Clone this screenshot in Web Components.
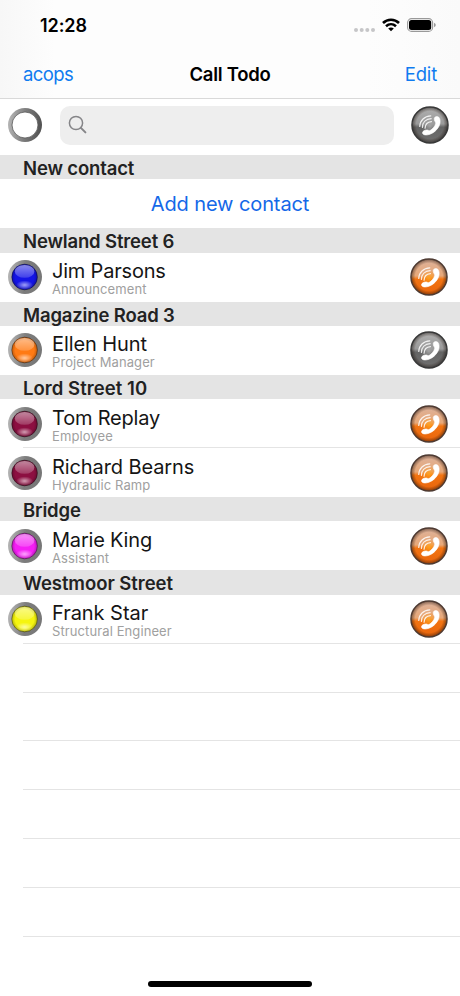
<!DOCTYPE html>
<html lang="en">
<head>
<meta charset="utf-8">
<title>Call Todo</title>
<style>
  body {
    margin: 0;
    background: #fff;
    font-family: Inter, "Liberation Sans", sans-serif;
    color: #151515;
  }
</style>
</head>
<body>
<todo-app></todo-app>
<script>
const define = (name, html) => {
  customElements.define(name, class extends HTMLElement {
    constructor() {
      super();
      this.attachShadow({ mode: "open" });
    }

    connectedCallback() {
      this.shadowRoot.innerHTML = typeof html === "function" ? html(this) : html;
    }
  });
};

define("status-bar", `
  <style>
    :host {
      display: flex;
      align-items: center;
      height: 50px;
      box-sizing: border-box;
      padding: 0 24px 0 40px;
      color: #000;
    }
    time {
      flex: 1;
      font-size: 18px;
      font-weight: 600;
      letter-spacing: -0.1px;
    }
    svg { display: block; }
    .dots { margin: 9px 7px 0 0; }
    .wifi { margin-right: 7px; }
  </style>
  <time>12:28</time>
  <svg class="dots" width="21" height="4" fill="#c6c6c8">
    <circle cx="2" cy="2" r="2"/><circle cx="7.7" cy="2" r="2"/>
    <circle cx="13.3" cy="2" r="2"/><circle cx="19" cy="2" r="2"/>
  </svg>
  <svg class="wifi" width="18" height="14" viewBox="0 0 18 14" fill="none" stroke="#000" stroke-width="2.6">
    <path d="M1 5 C5.5 .6 12.5 .6 17 5"/>
    <path d="M4 8.2 C7 5.5 11 5.5 14 8.2"/>
    <path d="M9 13.2 L6.2 10.5 C7.8 9.1 10.2 9.1 11.8 10.5 Z" fill="#000" stroke="none"/>
  </svg>
  <svg width="29" height="14" viewBox="0 0 29 14">
    <rect x=".6" y=".6" width="25" height="12.8" rx="4" fill="none" stroke="#999" stroke-width="1.1"/>
    <rect x="2" y="2" width="22.2" height="10" rx="2.5"/>
    <path d="M27 4.7 Q28.8 5.5 28.8 7 Q28.8 8.5 27 9.3 Z" fill="#999"/>
  </svg>
`);

define("nav-bar", `
  <style>
    :host {
      display: grid;
      grid-template-columns: 1fr auto 1fr;
      align-items: center;
      height: 48.5px;
      box-sizing: border-box;
      padding: 0 23px;
      border-bottom: 1px solid #d9d9d9;
      font-size: 18.5px;
      color: #0f7bf0;
    }
    h1 {
      margin: 0;
      font-size: 18.5px;
      font-weight: 600;
      letter-spacing: -0.25px;
      color: #000;
    }
    .left { letter-spacing: -0.6px; }
    .right { text-align: right; letter-spacing: -0.2px; }
  </style>
  <span class="left"><slot name="left"></slot></span>
  <h1><slot></slot></h1>
  <span class="right"><slot name="right"></slot></span>
`);

// Glossy lamp in a metal ring; the lamp colour comes from the "color" attribute
define("status-lamp", (el) => {
  const color = el.getAttribute("color");
  const lamp = color
    ? `<circle cx="16.6" cy="17" r="12.8" fill="${color}" stroke="#000" stroke-opacity=".45" stroke-width="1"/>
       <circle cx="16.6" cy="17" r="12.4" fill="url(#edge)"/>
       <ellipse cx="16.6" cy="11.4" rx="9.8" ry="6.4" fill="url(#shine)"/>
       <ellipse cx="16.6" cy="25" rx="8.5" ry="4.6" fill="url(#glow)"/>`
    : `<circle cx="17" cy="17" r="13" fill="#fff" stroke="#555" stroke-width=".8"/>`;
  return `
    <style>
      :host { display: block; width: 34px; height: 34px; }
      svg { display: block; }
    </style>
    <svg width="34" height="34" viewBox="0 0 34 34">
      <defs>
        <linearGradient id="ring" x1="0" y1=".45" x2="1" y2=".55">
          <stop offset="0" stop-color="#b5b5b5"/>
          <stop offset=".5" stop-color="#7c7c7c"/>
          <stop offset="1" stop-color="${color ? "#777" : "#505050"}"/>
        </linearGradient>
        <radialGradient id="edge">
          <stop offset=".76" stop-opacity="0"/>
          <stop offset="1" stop-opacity=".22"/>
        </radialGradient>
        <linearGradient id="shine" x1="0" y1="0" x2="0" y2="1">
          <stop offset="0" stop-color="#fff" stop-opacity=".5"/>
          <stop offset="1" stop-color="#fff" stop-opacity=".18"/>
        </linearGradient>
        <radialGradient id="glow">
          <stop offset="0" stop-color="#fff" stop-opacity=".6"/>
          <stop offset="1" stop-color="#fff" stop-opacity="0"/>
        </radialGradient>
      </defs>
      <circle cx="17" cy="17" r="17" fill="url(#ring)"/>
      ${lamp}
    </svg>`;
});

define("call-button", (el) => {
  const off = el.hasAttribute("off");
  const [top, mid, low, bottom] = off
    ? ["#b0b0b0", "#9a9a9a", "#646464", "#707070"]
    : ["#dcb29c", "#e8a878", "#f27412", "#e8640c"];
  return `
    <style>
      :host { display: block; width: 38px; height: 38px; }
      svg { display: block; }
    </style>
    <svg width="38" height="38" viewBox="0 0 40 40">
      <defs>
        <linearGradient id="body" x1="0" y1="0" x2="0" y2="1">
          <stop offset="0" stop-color="${top}"/>
          <stop offset=".47" stop-color="${mid}"/>
          <stop offset=".56" stop-color="${low}"/>
          <stop offset="1" stop-color="${bottom}"/>
        </linearGradient>
        <radialGradient id="light">
          <stop offset="0" stop-color="${off ? "#aaa" : "#ffa51e"}" stop-opacity=".9"/>
          <stop offset="1" stop-color="${off ? "#999" : "#ff8b16"}" stop-opacity="0"/>
        </radialGradient>
        <radialGradient id="shade">
          <stop offset=".76" stop-color="#2a1408" stop-opacity="0"/>
          <stop offset="1" stop-color="${off ? "#111" : "#2a1408"}" stop-opacity=".55"/>
        </radialGradient>
      </defs>
      <circle cx="20" cy="20" r="19" fill="url(#body)"/>
      <circle cx="20" cy="21" r="9" fill="url(#light)"/>
      <circle cx="20" cy="20" r="19" fill="url(#shade)" stroke="${off ? "#383838" : "#4d3a32"}" stroke-width="1.5"/>
      <g fill="none" stroke="#fff" stroke-width="1.3" stroke-linecap="round" stroke-opacity=".85">
        <path d="M9.2 21.5 C9.5 15.2 14.2 10.6 20.8 10.4"/>
        <path d="M12 22.5 C12.2 17.2 15.8 13.7 21.2 13.4"/>
        <path d="M14.8 23.4 C15 19.3 17.6 16.7 21.5 16.4"/>
      </g>
      <path fill="#fff" stroke="#fff" stroke-width=".7" stroke-linejoin="round" d="M24.6 14.5 C24 12 26 10.8 28 11.2 C30 11.6 30.8 14 30.6 17 C30.2 22.6 25 28.3 19 30 C16 30.9 12.6 30.6 12.2 28.6 C11.8 26.4 15 25 17.3 25.3 C18.6 25.5 19 26.4 20 25.9 C22.6 24.6 25.2 21.5 26 18.5 C26.3 17.2 25 16.4 24.6 14.5 Z"/>
    </svg>`;
});

define("search-row", `
  <style>
    :host {
      display: flex;
      align-items: center;
      height: 56.4px;
      box-sizing: border-box;
      padding: 0 11px 3px 8px;
    }
    .field {
      flex: 1;
      display: flex;
      align-items: center;
      height: 39px;
      margin: 0 17px 0 18px;
      padding-left: 8px;
      box-sizing: border-box;
      border-radius: 10px;
      background: #eee;
    }
  </style>
  <status-lamp></status-lamp>
  <div class="field">
    <svg width="20" height="20" fill="none" stroke="#858588" stroke-width="1.5" stroke-linecap="round">
      <circle cx="8" cy="8" r="6.6"/><path d="M12.9 12.9 L17.4 17.4" stroke-width="2"/>
    </svg>
  </div>
  <call-button off></call-button>
`);

define("list-section", (el) => `
  <style>
    :host { display: block; }
    h2 {
      margin: 0;
      height: 24.44px;
      line-height: 26px;
      padding-left: 23px;
      background: #e4e4e4;
      color: #222;
      font-size: 18.5px;
      font-weight: 600;
      letter-spacing: ${el.getAttribute("tracking") || "-0.15"}px;
    }
  </style>
  <h2>${el.getAttribute("title")}</h2>
  <slot></slot>
`);

define("contact-row", (el) => `
  <style>
    :host {
      display: flex;
      align-items: center;
      position: relative;
      height: 48.89px;
      box-sizing: border-box;
      padding: 0 12px 0 8px;
    }
    :host([divided])::after {
      content: "";
      position: absolute;
      left: 23px;
      right: 0;
      bottom: 0;
      height: 1px;
      background: #e4e4e4;
    }
    .text {
      flex: 1;
      padding: 4px 0 0 10px;
      white-space: nowrap;
    }
    .name {
      font-size: 20px;
      line-height: 21px;
      letter-spacing: ${el.getAttribute("tracking") || "-0.2"}px;
    }
    .role {
      font-size: 13px;
      line-height: 15px;
      letter-spacing: 0.1px;
      color: #a0a0a0;
    }
  </style>
  <status-lamp color="${el.getAttribute("color")}"></status-lamp>
  <div class="text">
    <div class="name"><slot></slot></div>
    <div class="role"><slot name="role"></slot></div>
  </div>
  <call-button ${el.hasAttribute("off") ? "off" : ""}></call-button>
`);

define("action-row", `
  <style>
    :host {
      display: flex;
      align-items: center;
      justify-content: center;
      height: 48.89px;
      font-size: 20px;
      letter-spacing: -0.1px;
      color: #1468e8;
    }
  </style>
  <slot></slot>
`);

define("empty-row", `
  <style>
    :host {
      display: block;
      height: 48.89px;
      box-sizing: border-box;
      margin-left: 23px;
      border-bottom: 1px solid #e4e4e4;
    }
  </style>
`);

define("todo-app", `
  <style>
    :host {
      display: flex;
      flex-direction: column;
      width: 460px;
      height: 996px;
      overflow: hidden;
    }
    header {
      background: linear-gradient(90deg, #f7f7f7, #fdfdfd 12%, #fdfdfd 80%, #fafafa);
    }
    main { flex: 1; }
    .home {
      align-self: center;
      width: 164px;
      height: 6px;
      margin-bottom: 9px;
      border-radius: 3px;
      background: #000;
    }
  </style>
  <header>
    <status-bar></status-bar>
    <nav-bar>
      <span slot="left">acops</span>
      Call Todo
      <span slot="right">Edit</span>
    </nav-bar>
  </header>
  <main>
    <search-row></search-row>
    <list-section title="New contact">
      <action-row>Add new contact</action-row>
    </list-section>
    <list-section title="Newland Street 6">
      <contact-row color="#1414e6">Jim Parsons<span slot="role">Announcement</span></contact-row>
    </list-section>
    <list-section title="Magazine Road 3">
      <contact-row color="#ff7a14" tracking="-0.1" off>Ellen Hunt<span slot="role">Project Manager</span></contact-row>
    </list-section>
    <list-section title="Lord Street 10" tracking="0.05">
      <contact-row color="#8c0f41" divided>Tom Replay<span slot="role">Employee</span></contact-row>
      <contact-row color="#8c0f41" tracking="-0.1">Richard Bearns<span slot="role">Hydraulic Ramp</span></contact-row>
    </list-section>
    <list-section title="Bridge">
      <contact-row color="#f51ef5">Marie King<span slot="role">Assistant</span></contact-row>
    </list-section>
    <list-section title="Westmoor Street" tracking="-0.05">
      <contact-row color="#f5f50f" tracking="-0.05" divided>Frank Star<span slot="role">Structural Engineer</span></contact-row>
    </list-section>
    <empty-row></empty-row>
    <empty-row></empty-row>
    <empty-row></empty-row>
    <empty-row></empty-row>
    <empty-row></empty-row>
    <empty-row></empty-row>
  </main>
  <div class="home"></div>
`);
</script>
</body>
</html>
